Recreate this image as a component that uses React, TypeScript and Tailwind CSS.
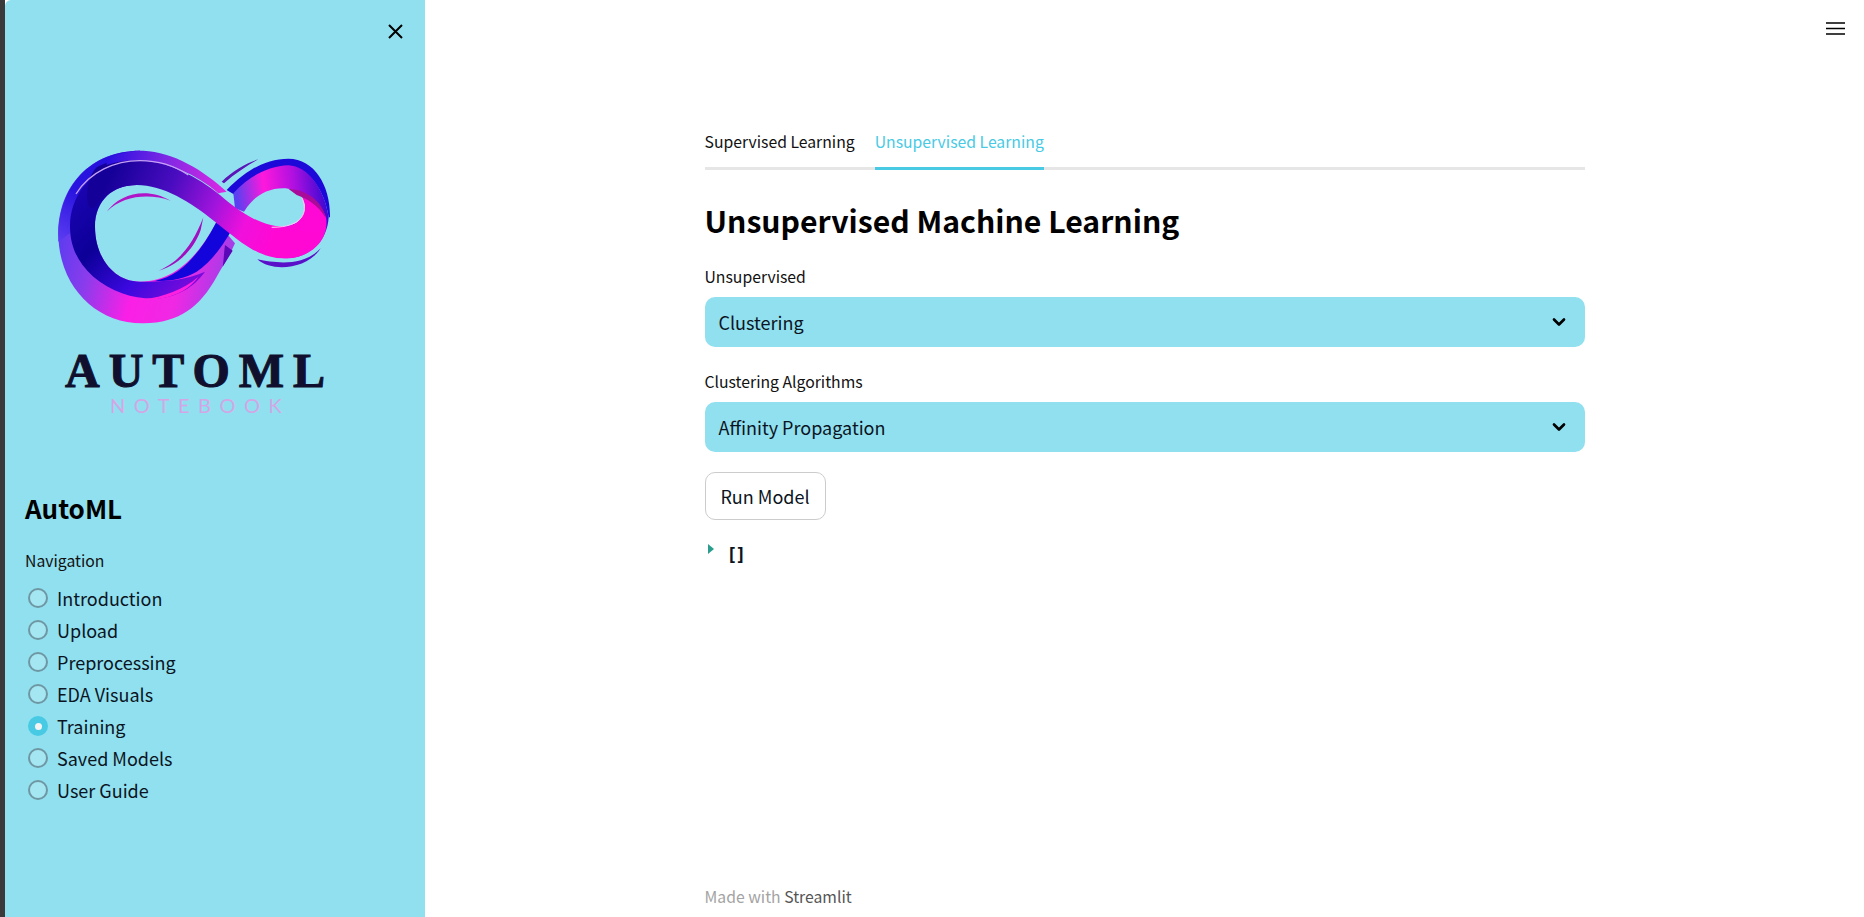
import { ChevronDown } from 'lucide-react';

const font = { fontFamily: '"Noto Sans CJK SC", "Noto Sans", sans-serif' };

const navItems = ['Introduction', 'Upload', 'Preprocessing', 'EDA Visuals', 'Training', 'Saved Models', 'User Guide'];

// Infinity mark from the logo image, drawn on a 930x630 grid
const InfinityMark = () => (
  <svg viewBox="0 0 930 630" className="block w-[310px] h-[210px] blur-[0.4px]">
    <defs>
      <linearGradient id="low" x1="55" y1="300" x2="560" y2="420" gradientUnits="userSpaceOnUse">
        <stop offset="0" stopColor="#5a3cf0" />
        <stop offset="0.22" stopColor="#8a3cec" />
        <stop offset="0.5" stopColor="#fb1fe6" />
        <stop offset="0.75" stopColor="#f028e4" />
        <stop offset="1" stopColor="#a63ce8" />
      </linearGradient>
      <linearGradient id="edge" x1="200" y1="70" x2="60" y2="330" gradientUnits="userSpaceOnUse">
        <stop offset="0" stopColor="#2410dc" />
        <stop offset="0.5" stopColor="#2a14e0" />
        <stop offset="1" stopColor="#5a3cf0" />
      </linearGradient>
      <linearGradient id="dark" x1="110" y1="150" x2="480" y2="500" gradientUnits="userSpaceOnUse">
        <stop offset="0" stopColor="#1c04b4" />
        <stop offset="0.35" stopColor="#0c0098" />
        <stop offset="0.65" stopColor="#3a08de" />
        <stop offset="1" stopColor="#8a0cdc" />
      </linearGradient>
      <linearGradient id="cross" x1="220" y1="110" x2="700" y2="320" gradientUnits="userSpaceOnUse">
        <stop offset="0" stopColor="#140098" />
        <stop offset="0.35" stopColor="#4a0cc0" />
        <stop offset="0.62" stopColor="#a014dc" />
        <stop offset="0.82" stopColor="#f010dc" />
        <stop offset="1" stopColor="#ff08d4" />
      </linearGradient>
      <linearGradient id="rim" x1="200" y1="120" x2="560" y2="180" gradientUnits="userSpaceOnUse">
        <stop offset="0" stopColor="#2a10e0" />
        <stop offset="0.45" stopColor="#7a28e4" />
        <stop offset="1" stopColor="#e028e4" />
      </linearGradient>
      <linearGradient id="right" x1="590" y1="200" x2="870" y2="170" gradientUnits="userSpaceOnUse">
        <stop offset="0" stopColor="#5a40f0" />
        <stop offset="0.3" stopColor="#ff18dc" />
        <stop offset="0.62" stopColor="#b010e0" />
        <stop offset="1" stopColor="#2a08d0" />
      </linearGradient>
    </defs>
    {/* lower band of the left loop */}
    <path
      fill="url(#low)"
      d="M300 62C150 62 55 170 55 310C55 470 170 582 310 580C420 578 480 530 530 440C550 405 570 375 585 340L530 275C490 350 420 455 300 455C220 455 165 380 165 290C165 210 220 165 290 165L330 80Z"
    />
    {/* blue outer edge, top left */}
    <path fill="url(#edge)" d="M55 335C50 170 150 62 300 62L300 100C190 100 100 170 90 310Z" />
    {/* blue edge next to the crossing */}
    <path fill="#1404dc" d="M345 452C420 440 480 370 528 278L575 300C550 345 515 395 470 425C430 448 385 455 345 452Z" />
    {/* dark inner shade of the left loop */}
    <path
      fill="url(#dark)"
      d="M230 100C150 125 90 200 90 290C90 350 115 400 160 440C220 490 290 510 360 505C430 495 470 460 495 425C440 450 380 455 300 455C220 455 165 380 165 290C165 210 220 165 290 165Z"
    />
    {/* right loop */}
    <path fill="#1c08d8" d="M560 180C620 118 680 86 745 86C825 86 872 170 870 262L866 262C855 180 805 112 745 110C690 112 630 140 585 195Z" />
    <path
      fill="url(#right)"
      d="M580 190C630 135 690 108 745 106C805 108 855 180 866 262C862 340 800 385 740 385L690 290C740 292 790 285 800 240C800 200 770 175 730 175C680 175 640 200 612 245L585 235Z"
    />
    <path fill="#ff08d6" d="M690 295C760 300 795 270 795 225C790 205 785 195 775 185C820 200 845 225 858 262C870 340 800 385 740 385C700 385 640 350 600 310Z" />
    <path fill="#a80c98" d="M745 176C790 178 845 205 858 265C835 225 800 205 770 195Z" />
    {/* crossing ribbon */}
    <path
      fill="url(#cross)"
      d="M170 112C210 90 260 82 310 88C390 98 470 140 540 195C620 265 680 292 750 292C790 305 825 310 852 300C820 365 770 385 730 385C650 385 590 325 525 275C450 215 370 165 290 165C240 165 195 185 165 230C135 260 130 150 170 112Z"
    />
    <path fill="#5a08b8" d="M555 345L578 362L548 410C552 385 552 365 555 345Z" />
    {/* top rim of the left loop */}
    <path fill="url(#rim)" d="M200 85C240 68 275 62 310 62C400 66 490 120 560 185L535 190C470 130 380 98 310 92C270 90 235 92 200 105Z" />
    <path fill="none" stroke="#c4a0f4" strokeWidth="4" d="M108 192C150 125 225 92 300 92C350 92 400 105 445 135" />
    <path fill="none" stroke="#ffc8f4" strokeWidth="3" d="M786 205C805 245 790 292 695 292" />
    {/* loose swooshes */}
    <path fill="#ff20e0" d="M310 508C370 500 430 480 475 440C440 490 380 510 310 508Z" />
    <path fill="#b015c8" d="M200 245C240 190 320 170 392 212C330 190 250 195 200 245Z" />
    <path fill="#a010c0" d="M356 422C420 395 460 340 490 262L482 300C465 350 420 405 356 422Z" />
    <path fill="#5a14b8" d="M545 155C575 125 615 100 655 88C620 108 585 130 552 160Z" />
    <path fill="#5a10c8" d="M652 388C710 400 790 410 842 355C805 415 700 430 652 388Z" />
  </svg>
);

const Select = ({ label, value }: { label: string; value: string }) => (
  <div>
    <div className="text-[15.75px] leading-[28px] text-[#111]">{label}</div>
    <div className="mt-[6px] h-[50px] rounded-[10px] bg-[#91e0ef] pl-[14px] pr-[16px] flex items-center justify-between">
      <span className="text-[18px] text-[#0b1422]">{value}</span>
      <ChevronDown className="w-[20px] h-[20px] text-black" strokeWidth={3.2} />
    </div>
  </div>
);

export default function App() {
  return (
    <div className="h-screen flex bg-white overflow-hidden text-black" style={font}>
      <div className="w-[5px] bg-[#3a3a3a]" />

      <aside className="relative w-[420px] bg-[#91e0ef] rounded-tl-[6px] flex flex-col">
        <button className="absolute left-[383px] top-[24px]">
          <svg viewBox="0 0 15 15" className="block w-[15px] h-[15px]">
            <path d="M1 1L14 14M14 1L1 14" stroke="#000" strokeWidth="2" fill="none" />
          </svg>
        </button>

        <div className="mt-[130px] ml-[35px]">
          <InfinityMark />
        </div>
        <div
          className="ml-[60px] mt-[8px] text-[48px] leading-[45px] font-bold tracking-[9px] text-[#10102e] whitespace-nowrap [-webkit-text-stroke:1px_#10102e]"
          style={{ fontFamily: '"Liberation Serif", serif' }}
        >
          AUTOML
        </div>
        <div
          className="ml-[105px] text-[20px] leading-[24px] tracking-[8.5px] text-[#d4a6e6] whitespace-nowrap"
          style={{ fontFamily: 'Lato, sans-serif' }}
        >
          NOTEBOOK
        </div>

        <h1 className="ml-[20px] mt-[71px] text-[26px] leading-[40px] font-semibold">AutoML</h1>
        <div className="ml-[20px] mt-[21px] text-[15.75px] leading-[24px] text-[#111]">Navigation</div>
        <ul className="ml-[23px] mt-[9px] flex flex-col">
          {navItems.map((item) => (
            <li key={item} className="h-[32px] flex items-center gap-[9px]">
              {item === 'Training' ? (
                <span className="w-[20px] h-[20px] rounded-full bg-[#48cae4] flex items-center justify-center">
                  <span className="w-[7px] h-[7px] rounded-full bg-[#f4f4f4]" />
                </span>
              ) : (
                <span className="w-[20px] h-[20px] rounded-full border-2 border-[#6f97a3] bg-[#a4e6f2]" />
              )}
              <span className="text-[18px] text-[#0b1422]">{item}</span>
            </li>
          ))}
        </ul>
      </aside>

      <main className="relative flex-1 flex flex-col">
        <button className="absolute right-[19px] top-[22px]">
          <svg viewBox="0 0 19 13" className="block w-[19px] h-[13px]">
            <path d="M0 1H19M0 6.5H19M0 12H19" stroke="#000" strokeWidth="1.6" fill="none" />
          </svg>
        </button>

        <div className="w-[880px] mx-auto pt-[120px] flex-1 flex flex-col">
          <div className="h-[50px] flex gap-[20px] border-b-[3px] border-[#e6e6e6]">
            <div className="h-[50px] leading-[44px] text-[15.75px] text-[#111]">Supervised Learning</div>
            <div className="h-[50px] leading-[44px] text-[15.75px] text-[#48cae4] border-b-[3px] border-[#48cae4]">
              Unsupervised Learning
            </div>
          </div>

          <h2 className="mt-[30px] text-[30.2px] leading-[41px] font-semibold">Unsupervised Machine Learning</h2>

          <div className="mt-[22px] flex flex-col gap-[21px]">
            <Select label="Unsupervised" value="Clustering" />
            <Select label="Clustering Algorithms" value="Affinity Propagation" />
          </div>

          <button className="mt-[20px] self-start h-[48px] w-[121px] rounded-[10px] border border-[#cccccc] bg-white text-[18px] text-[#0b1422]">
            Run Model
          </button>

          <div className="mt-[24px] flex items-start">
            <span className="ml-[3px] w-0 h-0 border-y-[5px] border-y-transparent border-l-[6px] border-l-[#2a9d8f]" />
            <span
              className="ml-[13px] mt-[1px] text-[18px] leading-[20px] font-bold tracking-[-2px] text-[#0b1422]"
              style={{ fontFamily: '"DejaVu Sans Mono", monospace' }}
            >
              []
            </span>
          </div>

          <div className="mt-auto pb-[8px] text-[15.75px] leading-[24px] text-[#a3a3a3]">
            Made with <span className="text-[#555]">Streamlit</span>
          </div>
        </div>
      </main>
    </div>
  );
}
